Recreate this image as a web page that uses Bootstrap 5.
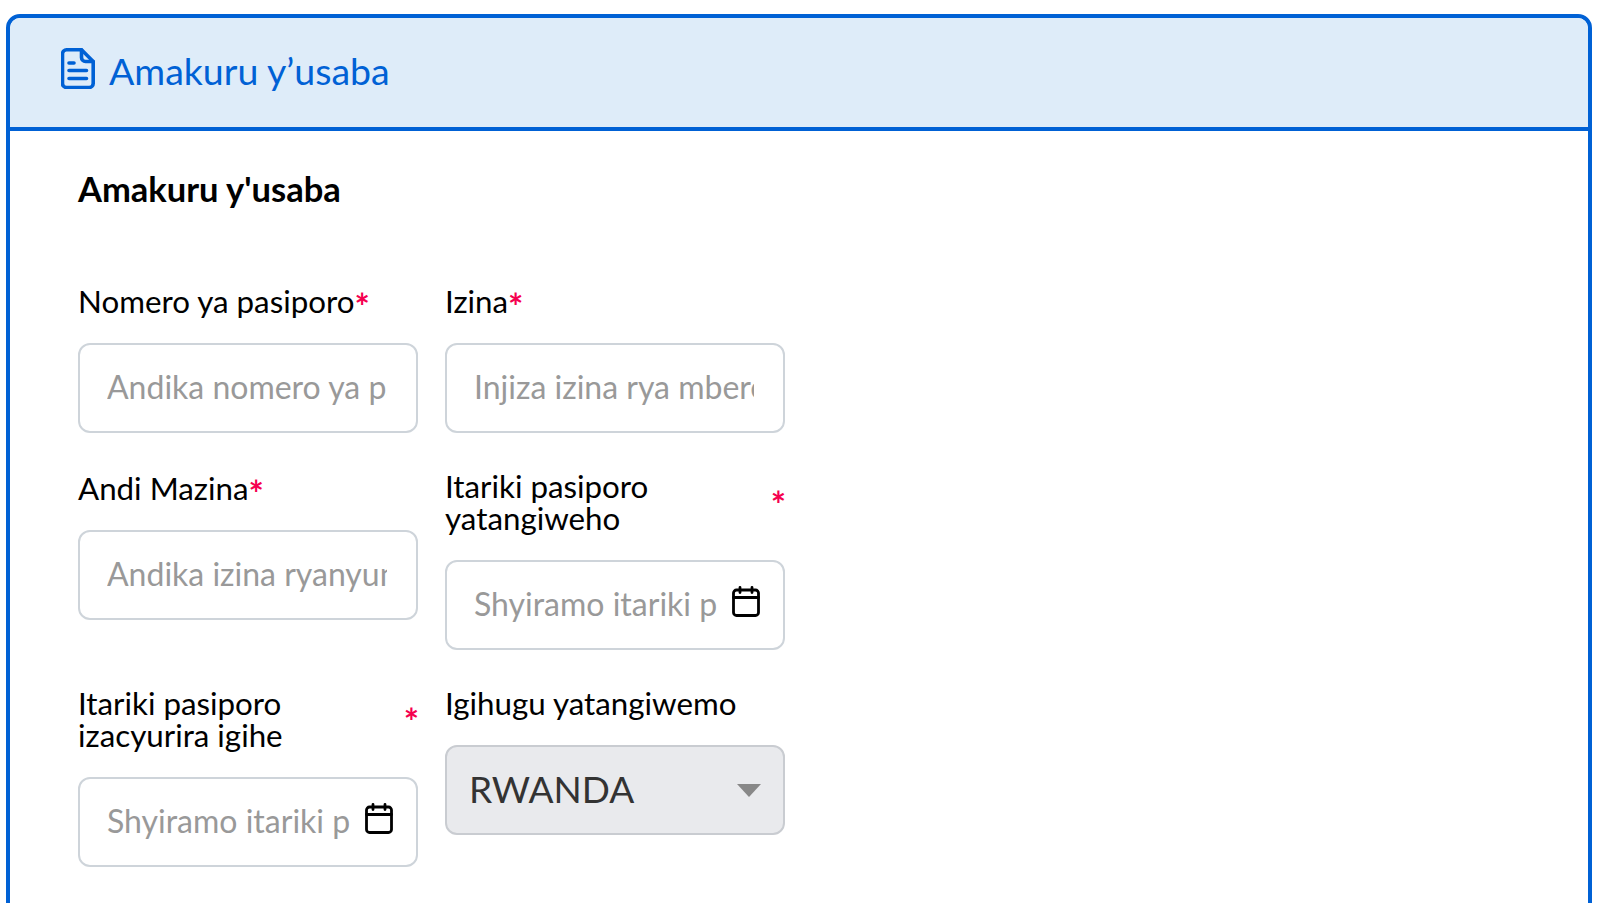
<!DOCTYPE html>
<html lang="rw">

<head>
    <meta charset="UTF-8">
    <meta name="viewport" content="width=device-width, initial-scale=1.0">
    <title>Amakuru y'usaba</title>
    <link href="https://cdn.jsdelivr.net/npm/bootstrap@5.3.0/dist/css/bootstrap.min.css" rel="stylesheet">
    <style>
        body {
            font-family: Lato, "Noto Sans", sans-serif;
            background-color: #fff;
            color: #000;
        }

        .page-wrap {
            padding: 14px 8px 0 6px;
            height: 903px;
        }

        .apply-card {
            --bs-card-border-width: 4px;
            --bs-card-border-color: #0061d5;
            --bs-card-border-radius: 14px;
            --bs-card-inner-border-radius: 10px;
            --bs-card-cap-bg: #deecf9;
            --bs-card-cap-padding-y: 0;
            --bs-card-cap-padding-x: 50px;
            height: 1000px;
        }

        .apply-card .card-header {
            height: 113px;
            border-bottom: 4px solid #0061d5;
            color: #0061d5;
            font-size: 37.5px;
            gap: 15px;
        }

        .header-icon {
            margin: 0 0 8px 1px;
        }

        .header-text {
            margin-bottom: 2px;
            margin-left: -1px;
        }

        .apply-card .card-body {
            padding: 38px 68px;
        }

        .section-title {
            font-size: 34.5px;
            font-weight: 700;
            line-height: 40px;
            margin-bottom: 74px;
        }

        .form-cols {
            grid-template-columns: 340px 340px;
            column-gap: 27px;
            row-gap: 37px;
            align-items: start;
        }

        .field-label {
            font-size: 31.3px;
            line-height: 32px;
            margin-bottom: 26px;
        }

        .label-single {
            min-height: 34px;
            padding-top: 2px;
        }

        .req-star {
            color: #f5004f;
            font-size: 36px;
            font-weight: 700;
            line-height: 0;
            vertical-align: -7px;
        }

        .req-star-side {
            flex: none;
            margin: 4px -1px 0 0;
        }

        .field-input {
            height: 90px;
            padding: 0 29px 4px 27px;
            font-size: 32px;
            border: 2px solid #ced4da;
            border-radius: 12px;
        }

        .field-input::placeholder {
            color: #999;
        }

        .date-input {
            padding-right: 66px;
        }

        .date-icon {
            position: absolute;
            top: 26px;
            right: 25px;
        }

        .field-select {
            height: 90px;
            padding: 0 22px 3px;
            font-size: 37px;
            color: #333;
            border: 2px solid #c9ccd1;
            border-radius: 12px;
            background-size: 24px 14px;
            background-position: right 22px center;
            background-image: url("data:image/svg+xml,%3csvg xmlns='http://www.w3.org/2000/svg' viewBox='0 0 24 14'%3e%3cpath fill='%23888' d='M0 1h24L12 14z'/%3e%3c/svg%3e");
        }

        .field-select:disabled {
            background-color: #e9eaed;
            opacity: 1;
        }
    </style>
</head>

<body>
    <div class="page-wrap overflow-hidden">
        <div class="card apply-card">
            <div class="card-header d-flex align-items-center">
                <svg class="header-icon" width="34" height="41" viewBox="0 0 34 41" fill="none" stroke="#0061d5" stroke-width="3.600" stroke-linecap="round" stroke-linejoin="round">
                    <path d="M5.500 1.800h15l11.700 11.700v22a4 4 0 0 1-4 4H5.500a4 4 0 0 1-4-4V5.800a4 4 0 0 1 4-4z" />
                    <path d="M20.500 1.800v7.700a4 4 0 0 0 4 4h7.700" />
                    <path d="M8 15h5M8 22.500h17.500M8 30.500h17.500" />
                </svg>
                <span class="header-text">Amakuru y’usaba</span>
            </div>
            <div class="card-body">
                <div class="section-title">Amakuru y'usaba</div>
                <form class="d-grid form-cols">
                    <div>
                        <label class="field-label label-single d-flex align-items-center">
                            <span>Nomero ya pasiporo<span class="req-star">*</span></span>
                        </label>
                        <input type="text" class="form-control field-input" placeholder="Andika nomero ya pasiporo">
                    </div>
                    <div>
                        <label class="field-label label-single d-flex align-items-center">
                            <span>Izina<span class="req-star">*</span></span>
                        </label>
                        <input type="text" class="form-control field-input" placeholder="Injiza izina rya mbere">
                    </div>
                    <div>
                        <label class="field-label label-single d-flex align-items-center">
                            <span>Andi Mazina<span class="req-star">*</span></span>
                        </label>
                        <input type="text" class="form-control field-input" placeholder="Andika izina ryanyuma">
                    </div>
                    <div>
                        <label class="field-label d-flex align-items-center justify-content-between">
                            <span>Itariki pasiporo<br>yatangiweho</span>
                            <span class="req-star req-star-side">*</span>
                        </label>
                        <div class="position-relative">
                            <input type="text" class="form-control field-input date-input" placeholder="Shyiramo itariki pasiporo yatangiweho">
                            <svg class="date-icon" width="28" height="31" viewBox="0 0 28 31" fill="none" stroke="#000" stroke-width="2.800" stroke-linecap="round" stroke-linejoin="round">
                                <rect x="1.500" y="4" width="25" height="25.500" rx="3" />
                                <path d="M1.500 11.500h25M8 1.500v5M20 1.500v5" />
                            </svg>
                        </div>
                    </div>
                    <div>
                        <label class="field-label d-flex align-items-center justify-content-between">
                            <span>Itariki pasiporo<br>izacyurira igihe</span>
                            <span class="req-star req-star-side">*</span>
                        </label>
                        <div class="position-relative">
                            <input type="text" class="form-control field-input date-input" placeholder="Shyiramo itariki pasiporo izacyurira igihe">
                            <svg class="date-icon" width="28" height="31" viewBox="0 0 28 31" fill="none" stroke="#000" stroke-width="2.800" stroke-linecap="round" stroke-linejoin="round">
                                <rect x="1.500" y="4" width="25" height="25.500" rx="3" />
                                <path d="M1.500 11.500h25M8 1.500v5M20 1.500v5" />
                            </svg>
                        </div>
                    </div>
                    <div>
                        <label class="field-label d-flex align-items-center">
                            <span>Igihugu yatangiwemo</span>
                        </label>
                        <select class="form-select field-select" disabled>
                            <option>RWANDA</option>
                        </select>
                    </div>
                </form>
            </div>
        </div>
    </div>

    <script src="https://cdn.jsdelivr.net/npm/bootstrap@5.3.0/dist/js/bootstrap.bundle.min.js"></script>
</body>

</html>
